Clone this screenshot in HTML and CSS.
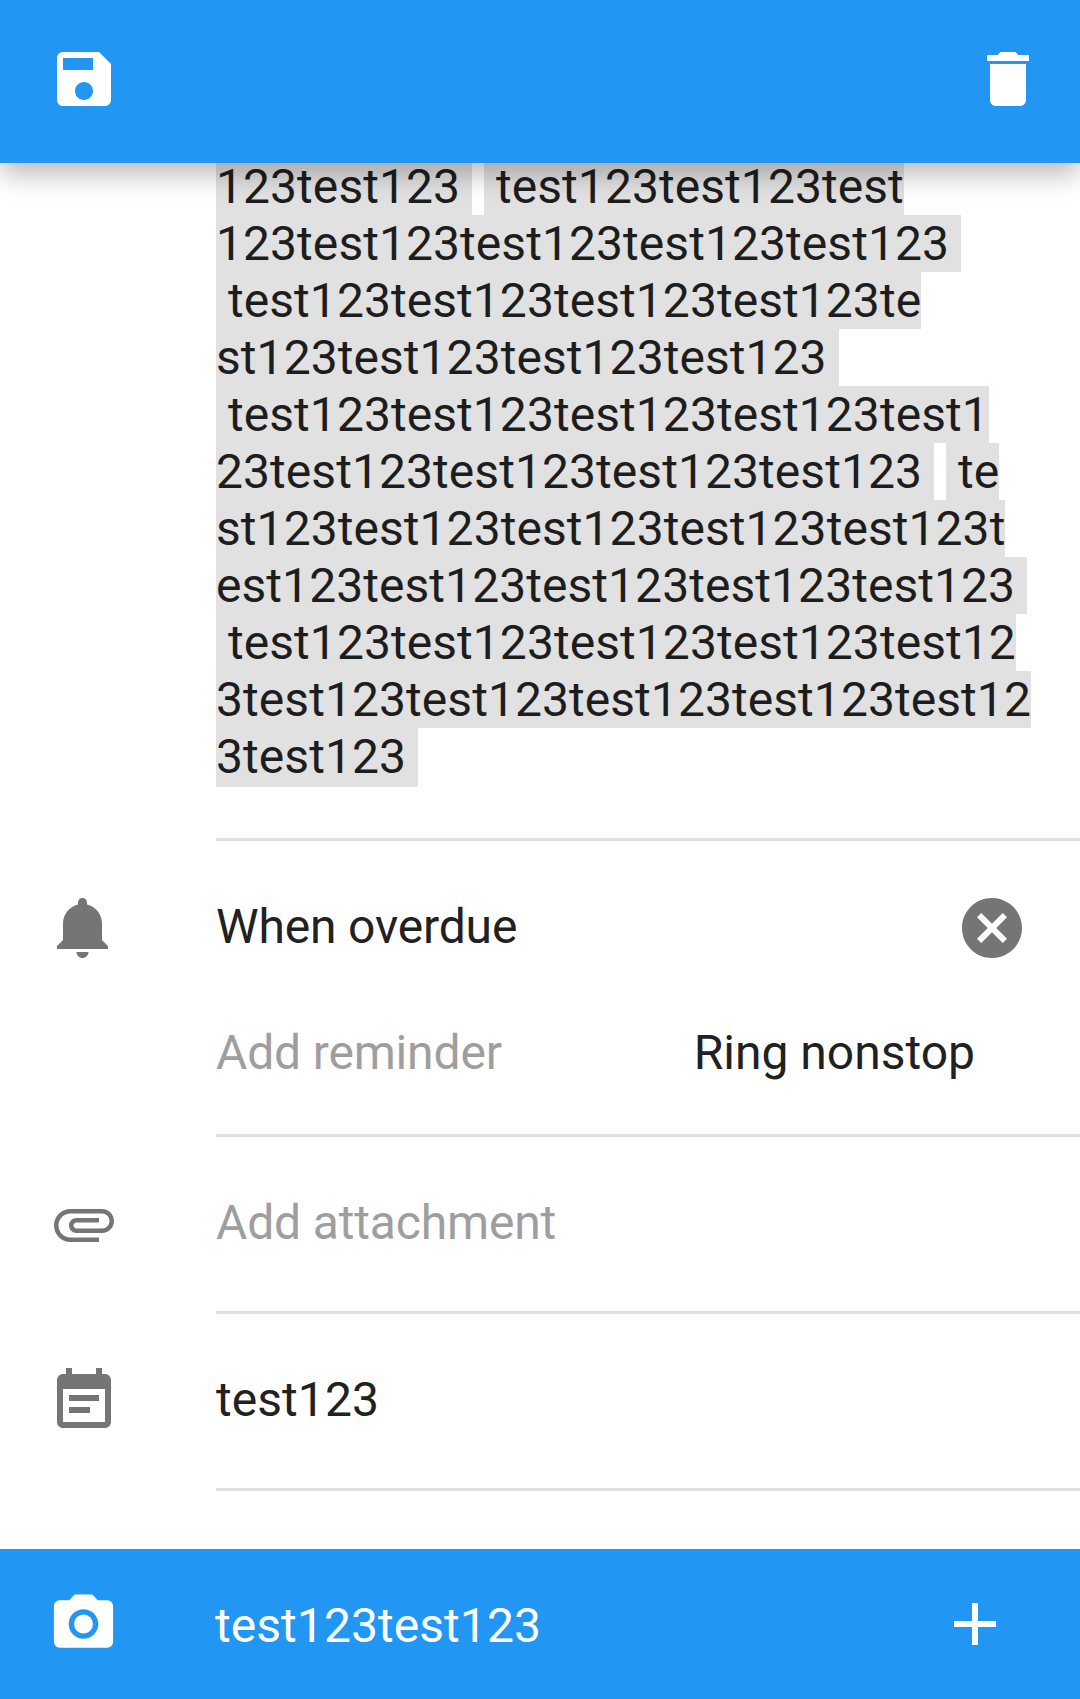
FILE: index.html
```html
<!DOCTYPE html>
<html lang="en">
<head>
<meta charset="utf-8">
<title>Edit task</title>
<link rel="stylesheet" href="styles.css">
</head>
<body>
<header class="toolbar">
  <svg class="icon" viewBox="0 0 24 24"><path d="M17 3H5c-1.11 0-2 .9-2 2v14c0 1.1.89 2 2 2h14c1.1 0 2-.9 2-2V7l-4-4zm-5 16c-1.66 0-3-1.34-3-3s1.34-3 3-3 3 1.34 3 3-1.34 3-3 3zm3-10H5V5h10v4z"/></svg>
  <svg class="icon" viewBox="0 0 24 24"><path d="M6 19c0 1.1.9 2 2 2h8c1.1 0 2-.9 2-2V7H6v12zM19 4h-3.500l-1-1h-5l-1 1H5v2h14V4z"/></svg>
</header>
<main class="content">
  <section class="row notes">
    <p class="tags"><span class="tag">123test123 </span> <span class="tag"> test123test123test
123test123test123test123test123 </span>
<span class="tag"> test123test123test123test123te
st123test123test123test123 </span>
<span class="tag"> test123test123test123test123test1
23test123test123test123test123 </span> <span class="tag"> te
st123test123test123test123test123t
est123test123test123test123test123 </span>
<span class="tag"> test123test123test123test123test12
3test123test123test123test123test12
<span class="tag tag-end">3test123 </span></span></p>
  </section>
  <section class="row reminders">
    <svg class="icon" viewBox="0 0 24 24"><path d="M11.500 22c1.100 0 2-.9 2-2h-4c0 1.100.9 2 2 2zm6.500-6v-5.500c0-3.070-2.130-5.640-5-6.320V3.500c0-.83-.67-1.500-1.500-1.500S10 2.670 10 3.500v.68c-2.870.68-5 3.250-5 6.320V16l-2 2v1h17v-1l-2-2z"/></svg>
    <div class="body">
      <div class="line">
        <span class="tight">When overdue</span>
        <svg class="icon clear" viewBox="0 0 24 24"><path d="M12 2C6.470 2 2 6.470 2 12s4.470 10 10 10 10-4.470 10-10S17.530 2 12 2zm5 13.590L15.590 17 12 13.410 8.410 17 7 15.590 10.590 12 7 8.410 8.410 7 12 10.590 15.590 7 17 8.410 13.410 12 17 15.590z"/></svg>
      </div>
      <div class="line">
        <span class="hint tight">Add reminder</span>
        <span class="ring">Ring nonstop</span>
      </div>
    </div>
  </section>
  <section class="row attachment">
    <svg class="icon" viewBox="0 0 24 24"><path d="M7.500 18C4.460 18 2 15.540 2 12.500S4.460 7 7.500 7H18c2.210 0 4 1.790 4 4s-1.790 4-4 4H9.500C8.120 15 7 13.880 7 12.500S8.120 10 9.500 10H17v1.500H9.500c-.55 0-1 .45-1 1s.45 1 1 1H18c1.380 0 2.500-1.120 2.500-2.500S19.380 8.500 18 8.500H7.500c-2.210 0-4 1.790-4 4s1.790 4 4 4H17V18H7.500z"/></svg>
    <div class="body hint tight">Add attachment</div>
  </section>
  <section class="row calendar">
    <svg class="icon" viewBox="0 0 24 24"><path d="M17 10H7v2h10v-2zm2-7h-1V1h-2v2H8V1H6v2H5c-1.110 0-2 .9-2 2v14c0 1.100.89 2 2 2h14c1.100 0 2-.9 2-2V5c0-1.100-.9-2-2-2zm0 16H5V8h14v11zm-5-5H7v2h7v-2z"/></svg>
    <div class="body wide">test123</div>
  </section>
</main>
<footer class="bottom-bar">
  <svg class="icon camera" viewBox="0 0 24 24"><circle cx="12" cy="12" r="3.200"/><path d="M9 2L7.170 4H4c-1.100 0-2 .9-2 2v12c0 1.100.9 2 2 2h16c1.100 0 2-.9 2-2V6c0-1.100-.9-2-2-2h-3.170L15 2H9zm3 15c-2.760 0-5-2.240-5-5s2.240-5 5-5 5 2.240 5 5-2.240 5-5 5z"/></svg>
  <span class="comment wide">test123test123</span>
  <svg class="icon add" viewBox="0 0 24 24"><path d="M19 13h-6v6h-2v-6H5v-2h6V5h2v6h6v2z"/></svg>
</footer>
</body>
</html>
```
FILE: styles.css
```css
* {
  box-sizing: border-box;
}

body {
  margin: 0;
  height: 1699px;
  display: flex;
  flex-direction: column;
  overflow: hidden;
  background: #fff;
  color: #212121;
  font: 48px/57px Roboto, sans-serif;
}

.icon {
  display: block;
  flex: none;
  width: 72px;
  height: 72px;
  fill: currentColor;
}

.toolbar {
  position: relative;
  z-index: 1;
  flex: none;
  display: flex;
  justify-content: space-between;
  height: 163px;
  padding: 43px 36px 0 48px;
  background: #2196f3;
  color: #fff;
  box-shadow: 0 12px 24px rgba(0, 0, 0, 0.26);
}

.content {
  flex: 1;
  min-height: 0;
}

/* Each row: 216px icon gutter, then text underlined by a divider */
.row {
  display: flex;
  background: linear-gradient(#e0e0e0, #e0e0e0) 216px 100% / 100% 3px no-repeat;
}

.row > .icon {
  margin: -6px 96px 0 48px;
  color: #757575;
}

.body {
  flex: 1;
}

.hint {
  color: #9e9e9e;
}

.tight {
  letter-spacing: -0.16px;
}

.wide {
  letter-spacing: 0.06px;
}

.notes {
  height: 683px;
  margin-top: -5px;
  padding-left: 216px;
}

.tags {
  margin: 0;
  white-space: pre;
  letter-spacing: 0.06px;
}

.tag {
  background: #e1e1e1;
  color: #1d1d1d;
}

.tag-end {
  padding-bottom: 2px;
}

.reminders {
  height: 296px;
  padding-top: 57px;
}

.line {
  display: flex;
  justify-content: space-between;
  height: 57px;
  margin-bottom: 69px;
}

.clear {
  margin: -6px 52px 0 0;
  color: #757575;
}

.ring {
  margin-right: 105px;
}

.attachment {
  height: 177px;
  padding-top: 57px;
}

.calendar {
  height: 177px;
  padding-top: 57px;
}

.bottom-bar {
  flex: none;
  display: flex;
  align-items: flex-start;
  height: 150px;
  padding: 39px 69px 0 48px;
  background: #2196f3;
  color: #fff;
}

.camera {
  width: 71px;
}

.comment {
  flex: 1;
  margin: 9px 0 0 96px;
}
```
